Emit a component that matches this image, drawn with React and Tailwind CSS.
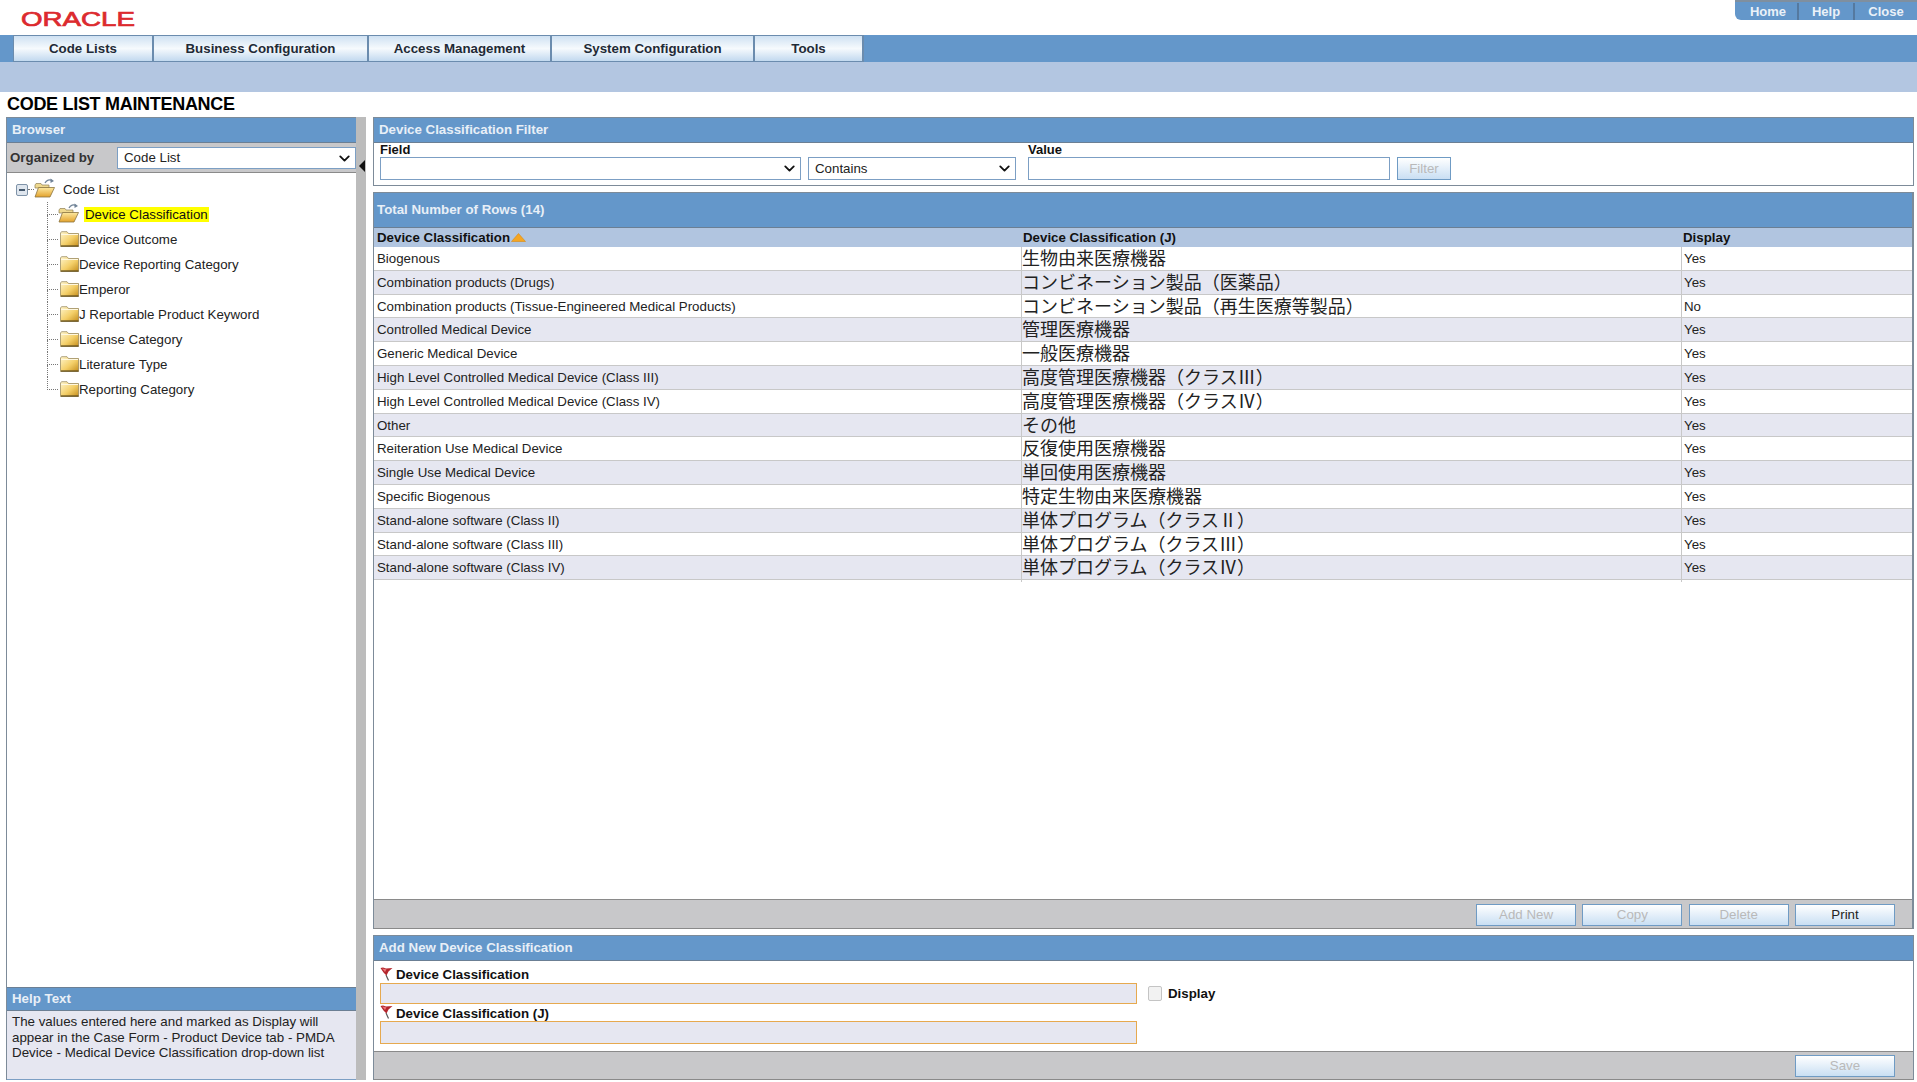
import React from 'react';
import { ChevronDown } from 'lucide-react';

const rows = [
  ['Biogenous', '生物由来医療機器', 'Yes'],
  ['Combination products (Drugs)', 'コンビネーション製品（医薬品）', 'Yes'],
  ['Combination products (Tissue-Engineered Medical Products)', 'コンビネーション製品（再生医療等製品）', 'No'],
  ['Controlled Medical Device', '管理医療機器', 'Yes'],
  ['Generic Medical Device', '一般医療機器', 'Yes'],
  ['High Level Controlled Medical Device (Class III)', '高度管理医療機器（クラスⅢ）', 'Yes'],
  ['High Level Controlled Medical Device (Class IV)', '高度管理医療機器（クラスⅣ）', 'Yes'],
  ['Other', 'その他', 'Yes'],
  ['Reiteration Use Medical Device', '反復使用医療機器', 'Yes'],
  ['Single Use Medical Device', '単回使用医療機器', 'Yes'],
  ['Specific Biogenous', '特定生物由来医療機器', 'Yes'],
  ['Stand-alone software (Class II)', '単体プログラム（クラスⅡ）', 'Yes'],
  ['Stand-alone software (Class III)', '単体プログラム（クラスⅢ）', 'Yes'],
  ['Stand-alone software (Class IV)', '単体プログラム（クラスⅣ）', 'Yes'],
];

const tabs = [
  ['Code Lists', 'w-[141px]'],
  ['Business Configuration', 'w-[215px]'],
  ['Access Management', 'w-[183px]'],
  ['System Configuration', 'w-[203px]'],
  ['Tools', 'w-[109px]'],
];

const treeItems = ['Device Outcome', 'Device Reporting Category', 'Emperor', 'J Reportable Product Keyword', 'License Category', 'Literature Type', 'Reporting Category'];

const FolderClosed = () => (
  <svg width="19" height="16" viewBox="0 0 19 16" className="shrink-0">
    <defs>
      <linearGradient id="fc" x1="0" y1="0" x2="1" y2="1">
        <stop offset="0" stopColor="#fff6cf" />
        <stop offset="0.55" stopColor="#f4cf68" />
        <stop offset="1" stopColor="#c48d1c" />
      </linearGradient>
    </defs>
    <path d="M0.5 2 L1.5 0.7 H7 L8.5 2.5 H18.5 V15.5 H0.5 Z" fill="url(#fc)" stroke="#8f8054" strokeWidth="0.7" />
    <path d="M1 3.5 H18" stroke="#fff8e0" strokeWidth="1" />
    <path d="M1 15 H18.5" stroke="#5e4c1c" strokeWidth="1.2" />
  </svg>
);

const FolderOpen = () => (
  <svg width="22" height="20" viewBox="0 0 22 20" className="shrink-0">
    <defs>
      <linearGradient id="fo" x1="0" y1="0" x2="0" y2="1">
        <stop offset="0" stopColor="#fde9a0" />
        <stop offset="1" stopColor="#e3a22c" />
      </linearGradient>
    </defs>
    <path d="M1 7 L2 5.5 H7 L8 7 H15 V10 H1 Z" fill="#efd98f" stroke="#8f8054" strokeWidth="0.7" />
    <path d="M1 19 L4.5 9.5 H20.5 L16 19 Z" fill="url(#fo)" stroke="#8a7440" strokeWidth="0.8" />
    <path d="M11 5 C12.5 2 15.5 1.2 18 2.5" fill="none" stroke="#6f8296" strokeWidth="1.3" />
    <path d="M16.5 0.5 L20 3 L16.5 5 Z" fill="#6f8296" />
  </svg>
);

const Flag = () => (
  <svg width="14" height="14" viewBox="0 0 14 14" className="mb-[3px] shrink-0">
    <path d="M6 8 L8.5 13.5" stroke="#555" strokeWidth="1.2" />
    <path d="M0.5 1 L3 0.5 L6 1.5 L12.5 1 L8.5 4.5 L6.5 8.5 L3.5 5.5 Z" fill="#b3262c" />
    <path d="M2 1.5 L6.5 2.2 L5 5 Z" fill="#ea7478" />
  </svg>
);

const Select = ({ value, className }) => (
  <div className={`relative ${className}`}>
    <select className="h-full w-full appearance-none border border-[#7c9fc4] bg-white pl-[6px] text-[13.3px] text-[#222]">
      <option>{value}</option>
    </select>
    <ChevronDown size={17} strokeWidth={2.6} className="pointer-events-none absolute right-[3px] top-[3px] text-[#111]" />
  </div>
);

const Button = ({ children, disabled }) => (
  <button className={`h-[22px] w-[100px] border border-[#6f9bc4] bg-gradient-to-b from-white to-[#c9dff3] text-[13.3px] ${disabled ? 'text-[#b9b9b9]' : 'text-[#222]'}`}>
    {children}
  </button>
);

const PanelHeader = ({ children }) => (
  <div className="flex h-[25px] shrink-0 items-center border-b border-[#6b7f94] bg-[#6497ca] pl-[5px] text-[13.3px] font-bold text-[#e8eff7]">
    {children}
  </div>
);

// the roman numerals sit in a full width cell in the reference
const JpText = ({ text }) => (
  <span>
    {text.split(/([ⅡⅢⅣ])/).map((part, index) =>
      /[ⅡⅢⅣ]/.test(part) ? <span key={index} className="inline-block w-[18px] text-center">{part}</span> : part
    )}
  </span>
);

const App = () => {
  return (
    <div className="flex h-[1082px] w-[1917px] flex-col overflow-hidden bg-white font-['Liberation_Sans',Arial,sans-serif] text-[13.3px] text-[#222]">
      <div className="flex h-[35px] shrink-0 items-start justify-between">
        <svg width="120" height="24" viewBox="0 0 120 24" className="ml-[21px] mt-[8px]">
          <text x="0" y="18" textLength="114" lengthAdjust="spacingAndGlyphs" fontFamily="Liberation Sans" fontWeight="400" fontSize="21" fill="#dc2a2e" stroke="#dc2a2e" strokeWidth="0.7">ORACLE</text>
        </svg>
        <div className="flex h-[20px] w-[182px] rounded-bl-[6px] border-t-2 border-[#7f8f9f] bg-[#6497ca] pt-[1px] text-[13px] font-bold text-[#eaf1f8]">
          <div className="flex w-[64px] items-center justify-center border-r-2 border-[#55799f] pl-[4px]">Home</div>
          <div className="flex w-[56px] items-center justify-center border-r-2 border-[#55799f]">Help</div>
          <div className="flex flex-1 items-center justify-center">Close</div>
        </div>
      </div>

      <div className="flex h-[27px] shrink-0 bg-[#6497ca] pl-[13px]">
        {tabs.map(([label, width]) => (
          <div key={label} className={`${width} flex items-center justify-center border-y border-r-2 border-[#6b8cae] first:border-l bg-gradient-to-b from-[#cfe1f2] via-[#f6fafd] to-[#c2d9ef] pt-[1px] text-[13.3px] font-bold text-[#1f2a36]`}>
            {label}
          </div>
        ))}
      </div>
      <div className="h-[30px] shrink-0 bg-[#b3c6e1]" />

      <div className="flex h-[25px] shrink-0 items-center pl-[7px] text-[18px] font-bold tracking-[-0.3px] text-black">
        CODE LIST MAINTENANCE
      </div>

      <div className="flex h-[963px] shrink-0 pl-[6px]">
        <div className="flex w-[350px] shrink-0 flex-col border-l border-t border-[#7d8b99]">
          <PanelHeader>Browser</PanelHeader>
          <div className="flex h-[30px] shrink-0 items-center border-b border-[#8a8a8a] bg-[#c8c8ca] pl-[3px]">
            <span className="w-[107px] pt-[1px] font-bold text-[#333]">Organized by</span>
            <Select value="Code List" className="h-[22px] flex-1" />
          </div>
          <div className="flex-1 pt-[4px]">
            <div className="flex h-[25px] items-center pl-[9px]">
              <div className="flex h-[12px] w-[12px] items-center justify-center rounded-[2px] border border-[#7f93a8] bg-[#dfe6ee]">
                <div className="h-[2px] w-[6px] bg-[#44586c]" />
              </div>
              <div className="w-[6px] border-t border-dotted border-[#777]" />
              <div className="mb-[3px]"><FolderOpen /></div>
              <span className="ml-[7px] text-[#222]">Code List</span>
            </div>
            <div className="flex h-[25px] items-center pl-[40px]">
              <div className="flex h-[25px] w-[11px] shrink-0 flex-col">
                <div className="h-[13px] border-b border-l border-dotted border-[#777]" />
                <div className="flex-1 border-l border-dotted border-[#777]" />
              </div>
              <div className="mb-[3px]"><FolderOpen /></div>
              <span className="ml-[4px] flex h-[15px] items-center bg-[#ffff00] px-[1px] text-[#111]">Device Classification</span>
            </div>
            {treeItems.map((item, index) => (
              <div key={item} className="flex h-[25px] items-center pl-[40px]">
                <div className="flex h-[25px] w-[11px] shrink-0 flex-col">
                  <div className="h-[13px] border-b border-l border-dotted border-[#777]" />
                  <div className={`flex-1 border-dotted border-[#777] ${index < treeItems.length - 1 ? 'border-l' : ''}`} />
                </div>
                <div className="mb-[2px] ml-[2px]"><FolderClosed /></div>
                <span className="text-[#222]">{item}</span>
              </div>
            ))}
          </div>
          <div className="flex h-[24px] shrink-0 items-center border-y border-[#6b7f94] bg-[#6497ca] pl-[5px] font-bold text-[#e8eff7]">Help Text</div>
          <div className="h-[69px] shrink-0 border-b border-[#7c9fc4] bg-[#e6e7f1] px-[5px] pt-[3px] text-[13.35px] leading-[15.5px] text-[#222]">
            The values entered here and marked as Display will appear in the Case Form - Product Device tab - PMDA Device - Medical Device Classification drop-down list
          </div>
        </div>

        <div className="flex w-[10px] shrink-0 flex-col bg-[#bcbcbc]">
          <svg width="10" height="56" viewBox="0 0 10 56" className="shrink-0">
            <path d="M9 43 L3 49 L9 55 Z" fill="#111" />
          </svg>
        </div>

        <div className="ml-[7px] flex w-[1541px] shrink-0 flex-col">
          <div className="h-[69px] shrink-0 border border-[#7d8b99]">
            <PanelHeader>Device Classification Filter</PanelHeader>
            <div className="flex items-end pl-[6px]">
              <div className="flex w-[421px] flex-col">
                <span className="h-[14px] text-[13px] font-bold leading-[14px] text-[#111]">Field</span>
                <Select value="" className="h-[23px]" />
              </div>
              <Select value="Contains" className="ml-[7px] h-[23px] w-[208px]" />
              <div className="ml-[12px] flex w-[362px] flex-col">
                <span className="h-[14px] text-[13px] font-bold leading-[14px] text-[#111]">Value</span>
                <input className="h-[23px] border border-[#7c9fc4] bg-white" />
              </div>
              <button className="ml-[7px] h-[23px] w-[54px] border border-[#6f9bc4] bg-gradient-to-b from-white to-[#c9dff3] text-[13.3px] text-[#b9b9b9]">Filter</button>
            </div>
          </div>

          <div className="mt-[6px] flex h-[737px] shrink-0 flex-col border-l border-r-2 border-t border-[#7d8b99]">
            <div className="flex h-[35px] shrink-0 items-center border-b border-[#6b7f94] bg-[#6497ca] pl-[3px] font-bold text-[#e8eff7]">Total Number of Rows (14)</div>
            <div className="grid h-[19px] shrink-0 grid-cols-[647px_660px_1fr] items-center bg-[#b1c5e0] font-bold text-[#111]">
              <div className="flex items-center pl-[3px]">
                Device Classification
                <svg width="15" height="9" viewBox="0 0 15 9" className="ml-[1px]">
                  <path d="M7.5 0.5 L14.5 8.5 H0.5 Z" fill="#f5a623" stroke="#d98a10" strokeWidth="0.6" />
                </svg>
              </div>
              <div className="pl-[2px]">Device Classification (J)</div>
              <div className="pl-[2px]">Display</div>
            </div>
            {rows.map(([name, jp, display], index) => (
              <div key={name} className={`grid h-[23.8px] shrink-0 grid-cols-[647px_660px_1fr] border-b border-[#c8c8c8] ${index % 2 ? 'bg-[#e6e7f1]' : 'bg-white'}`}>
                <div className="flex items-center pb-[2px] pl-[3px] text-[#222]">{name}</div>
                <div className="flex items-center border-l border-[#c8c8c8] pb-[6px] font-['Noto_Sans_CJK_JP','Liberation_Sans',sans-serif] text-[18px] leading-[20px] text-[#222]"><JpText text={jp} /></div>
                <div className="flex items-center border-l border-[#c8c8c8] pb-[2px] pl-[2px] text-[#222]">{display}</div>
              </div>
            ))}
            <div className="flex-1" />
            <div className="flex h-[30px] shrink-0 items-center justify-end gap-[6.33px] border-y border-[#8a8a8a] bg-[#c8c8ca] pr-[17px] pt-[1px]">
              <Button disabled>Add New</Button>
              <Button disabled>Copy</Button>
              <Button disabled>Delete</Button>
              <Button>Print</Button>
            </div>
          </div>

          <div className="mt-[6px] flex h-[145px] shrink-0 flex-col border-x border-t border-[#7d8b99]">
            <PanelHeader>Add New Device Classification</PanelHeader>
            <div className="flex flex-1 pl-[6px] pt-[6px]">
              <div className="flex w-[757px] shrink-0 flex-col">
                <div className="flex h-[16px] items-center gap-[2px] font-bold text-[#111]"><Flag />Device Classification</div>
                <input className="h-[21px] border-[1.5px] border-[#e6a94f] bg-[#e6e7f1]" />
                <div className="mt-[2px] flex h-[15px] items-center gap-[2px] font-bold text-[#111]"><Flag />Device Classification (J)</div>
                <input className="h-[23px] border-[1.5px] border-[#e6a94f] bg-[#e6e7f1]" />
              </div>
              <div className="ml-[11px] mt-[16px] flex h-[21px] items-center">
                <div className="h-[15px] w-[14px] rounded-[2px] border border-[#c4c4c4] bg-[#f2f2f2]" />
                <span className="ml-[6px] font-bold text-[#111]">Display</span>
              </div>
            </div>
            <div className="flex h-[29px] shrink-0 items-center justify-end border-y border-[#8a8a8a] bg-[#c8c8ca] pr-[18px]">
              <Button disabled>Save</Button>
            </div>
          </div>
        </div>
      </div>
    </div>
  );
};

export default App;
